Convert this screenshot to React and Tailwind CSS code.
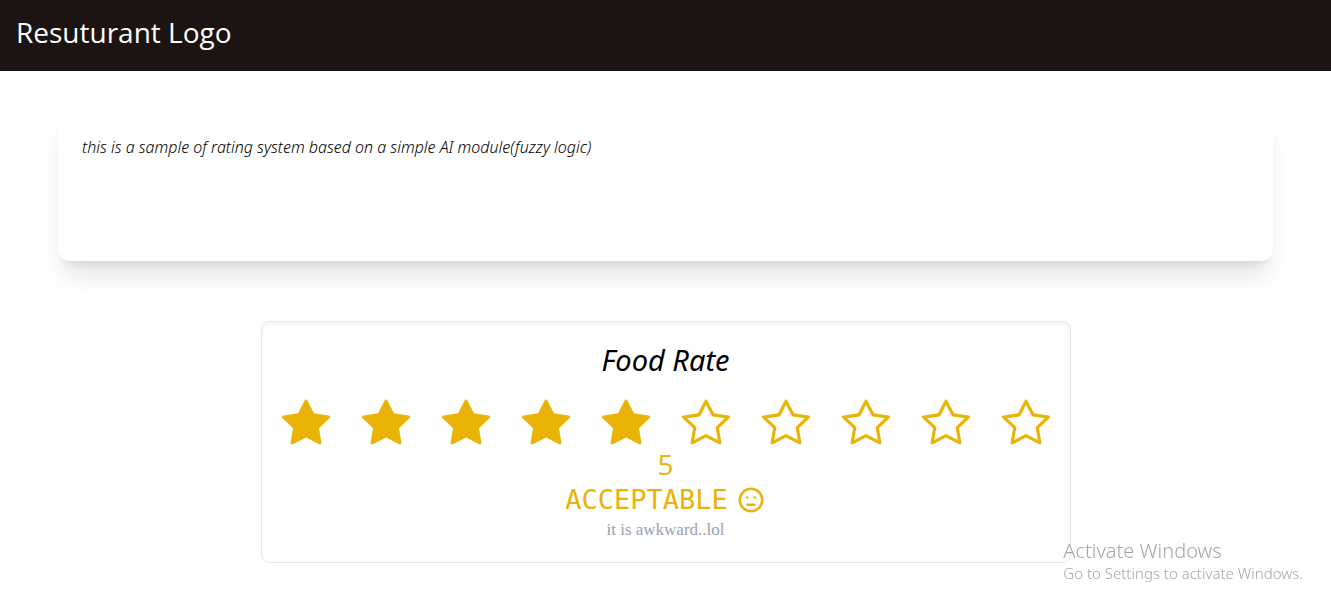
import { useState } from "react";
import { BsStar, BsStarFill } from "react-icons/bs";

function NeutralFace() {
  return (
    <svg viewBox="0 0 24 24" width="1em" height="1em" fill="none" stroke="currentColor" strokeWidth="2" strokeLinecap="round" aria-hidden="true">
      <circle cx="12" cy="12" r="9" />
      <path d="M9 10h.01M15 10h.01" />
      <path d="M9.2 15.8h5.6" />
    </svg>
  );
}

function StarRow({ value, onChange }) {
  return (
    <div className="flex flex-wrap justify-center gap-8">
      {Array.from({ length: 10 }, (_, i) => {
        const Star = i < value ? BsStarFill : BsStar;
        return (
          <button key={i} type="button" aria-label={`Rate ${i + 1}`} onClick={() => onChange(i + 1)} className="cursor-pointer text-5xl">
            <Star />
          </button>
        );
      })}
    </div>
  );
}

export default function App() {
  const [rate, setRate] = useState(5);
  return (
    <div className="font-['Open_Sans',sans-serif] text-black">
      <header className="bg-[#1c1412] px-4 pt-[14px] pb-5 text-white">
        <h1 className="text-[28px] leading-[37px]">Resuturant Logo</h1>
      </header>
      <main className="flex flex-col items-center px-[58px] pt-10">
        <section className="min-h-[150px] w-full rounded-xl p-6 shadow-xl">
          <p className="font-['Noto_Sans',sans-serif] text-[16px] leading-6 font-light italic">this is a sample of rating system based on a simple AI module(fuzzy logic)</p>
        </section>
        <section className="mt-15 flex flex-col items-center rounded-lg border border-gray-200 p-5 text-[#eab308] inset-shadow-sm">
          <h2 className="mb-5 font-['Noto_Sans',sans-serif] text-[29px] leading-9 text-black italic">Food Rate</h2>
          <StarRow value={rate} onChange={setRate} />
          <p className="text-[28px] leading-9">{rate}</p>
          <div className="flex items-center gap-2 text-3xl">
            <p className="font-['DejaVu_Sans_Mono',monospace] text-[27px] leading-9">ACCEPTABLE</p>
            <NeutralFace />
          </div>
          <p className="font-['Liberation_Serif',serif] text-[17px] leading-6 text-gray-400">it is awkward..lol</p>
        </section>
      </main>
      <aside className="pointer-events-none fixed right-7 bottom-7 font-['Noto_Sans',sans-serif] font-light text-[#a6a6a6]">
        <p className="text-[20px] leading-6">Activate Windows</p>
        <p className="text-[15px] leading-5">Go to Settings to activate Windows.</p>
      </aside>
    </div>
  );
}
